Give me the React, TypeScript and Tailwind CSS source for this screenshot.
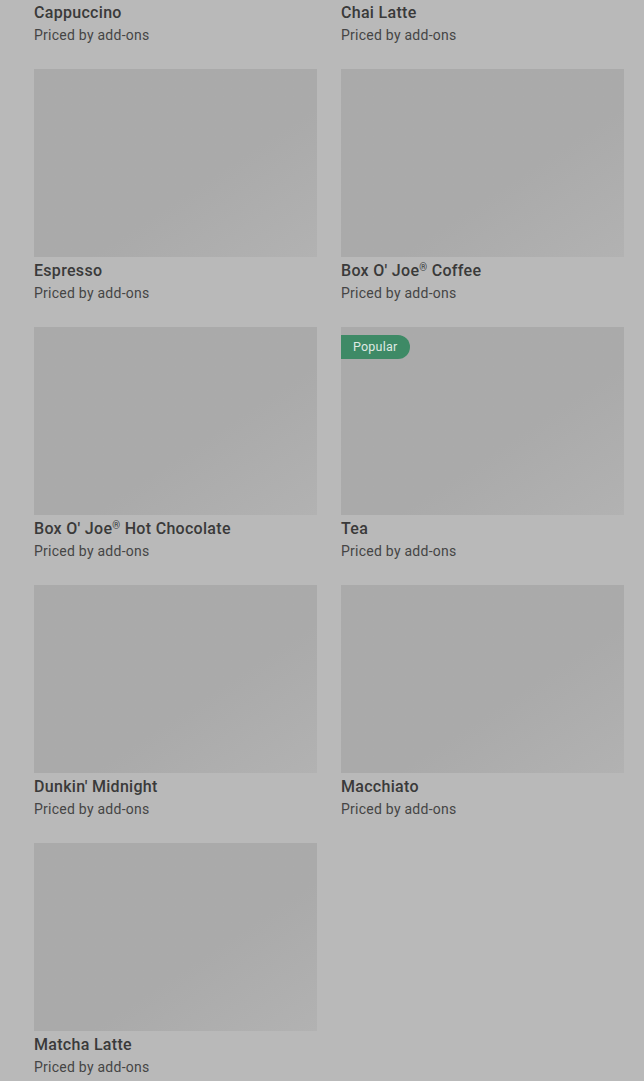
const items = [
  { name: "Cappuccino" },
  { name: "Chai Latte" },
  { name: "Espresso" },
  { name: "Box O' Joe", mark: " Coffee" },
  { name: "Box O' Joe", mark: " Hot Chocolate" },
  { name: "Tea", popular: true },
  { name: "Dunkin' Midnight" },
  { name: "Macchiato" },
  { name: "Matcha Latte" },
];

function MenuCard({ name, mark, popular }: { name: string; mark?: string; popular?: boolean }) {
  return (
    <div className="flex flex-col">
      <div className="relative h-[188px] bg-gradient-to-br from-[#aaaaaa] from-60% to-[#b2b2b2]">
        {popular && (
          <span className="absolute left-0 top-2 flex h-6 items-center rounded-r-full bg-[#3e8a66] pl-3 pr-[13px] text-[12.5px] tracking-[0.2px] text-[#dfe9e3]">
            Popular
          </span>
        )}
      </div>
      <p className="mt-[2px] h-6 text-base font-medium leading-6 tracking-[0.3px] text-[#3a3a3a]">
        {name}
        {mark !== undefined && (
          <>
            <span className="relative -top-[5px] text-[10px] leading-none">®</span>
            {mark}
          </>
        )}
      </p>
      <p className="text-sm leading-5 tracking-[0.25px] text-[#454545]">Priced by add-ons</p>
    </div>
  );
}

export default function App() {
  return (
    <div className="h-[1081px] overflow-hidden bg-[#b9b9b9] font-['Roboto',sans-serif]">
      <div className="-mt-[189px] grid grid-cols-2 gap-x-6 gap-y-6 pl-[34px] pr-5">
        {items.map((item) => (
          <MenuCard key={item.name + (item.mark ?? "")} name={item.name} mark={item.mark} popular={item.popular} />
        ))}
      </div>
    </div>
  );
}
